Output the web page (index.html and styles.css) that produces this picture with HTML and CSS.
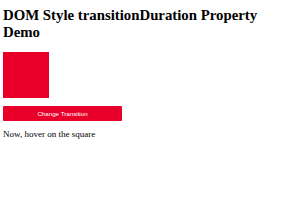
FILE: index.html
```html
<!DOCTYPE html>
<html lang="en">
<head>
    <meta charset="UTF-8">
    <meta name="viewport" content="width=device-width, initial-scale=1.0">
    <title>DOM Style transitionDuration Property</title>
    <link rel="stylesheet" href="styles.css">
</head>
<body>

<h2 class="title">DOM Style transitionDuration Property Demo</h2>

<!-- the square that grows on hover -->
<div class="box" id="box"></div>

<button class="change-btn" id="changeBtn">Change Transition</button>

<p class="note">Now, hover on the square</p>

<script>
    document.getElementById('changeBtn').addEventListener('click', function () {
        document.getElementById('box').style.transitionDuration = '3s';
    });
</script>

</body>
</html>
```

FILE: styles.css
```css
/* General Styling */
body {
    font-family: 'Liberation Serif', 'Times New Roman', serif;
    background-color: #fff;
    margin: 0;
    padding: 7px 3px;
    color: #000;
}
.title {
    font-size: 14.8px;
    line-height: 17px;
    font-weight: bold;
    margin: 0 0 11px;
}
.box {
    width: 46px;
    height: 46px;
    background-color: #e8002a;
    transition: width 1s, height 1s;
}
.box:hover {
    width: 80px;
    height: 80px;
}
.change-btn {
    display: block;
    width: 119px;
    height: 15px;
    margin-top: 8px;
    padding: 0;
    background-color: #e8002a;
    color: #fff;
    border: none;
    border-radius: 1px;
    font-family: 'Liberation Sans', Arial, sans-serif;
    font-size: 6.2px;
    cursor: pointer;
}
.note {
    font-size: 9px;
    margin: 8px 0 0;
}
```
